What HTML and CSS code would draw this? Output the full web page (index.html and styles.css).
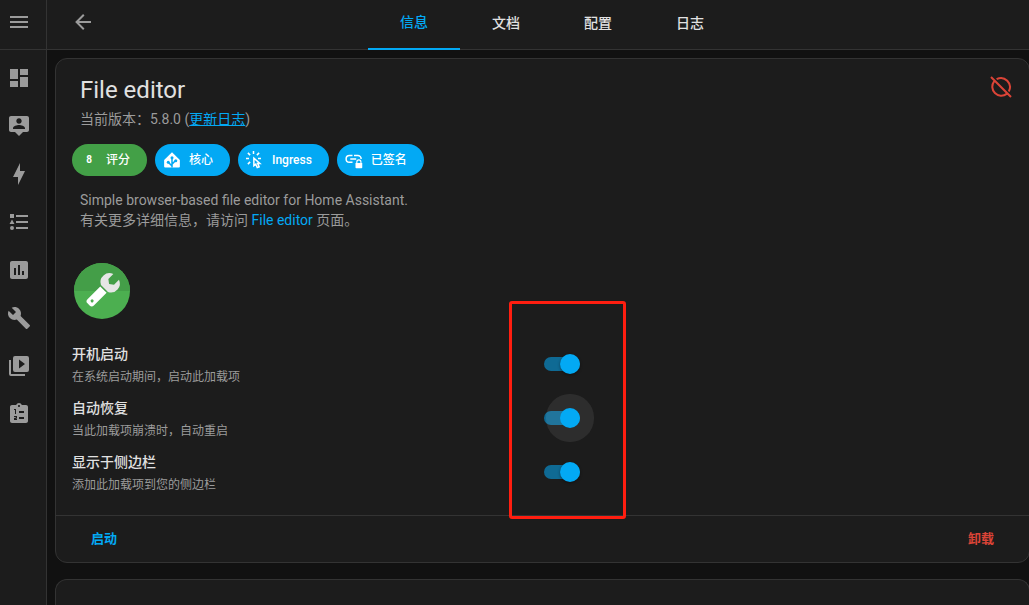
FILE: index.html
```
<!DOCTYPE html>
<html lang="zh-CN">
<head>
    <meta charset="UTF-8">
    <meta name="viewport" content="width=device-width, initial-scale=1.0">
    <title>File editor</title>
    <link rel="stylesheet" href="styles.css">
</head>
<body>

<nav class="sidebar">
    <button class="menu-button" aria-label="菜单">
        <svg viewBox="0 0 24 24"><path d="M3,6H21V8H3V6M3,11H21V13H3V11M3,16H21V18H3V16Z"/></svg>
    </button>
    <a href="#" aria-label="概览">
        <svg viewBox="0 0 24 24"><path d="M13,3V9H21V3M13,21H21V11H13M3,21H11V15H3M3,13H11V3H3V13Z"/></svg>
    </a>
    <a href="#" aria-label="地图">
        <svg viewBox="0 0 24 24"><path d="M20 2H4C2.9 2 2 2.9 2 4V16C2 17.11 2.9 18 4 18H8L12 22L16 18H20C21.11 18 22 17.11 22 16V4C22 2.9 21.11 2 20 2M12 4.3C13.5 4.3 14.7 5.5 14.7 7S13.5 9.7 12 9.7 9.3 8.5 9.3 7 10.5 4.3 12 4.3M18 15H6V14.1C6 12.1 10 11 12 11S18 12.1 18 14.1V15Z"/></svg>
    </a>
    <a href="#" aria-label="能源">
        <svg viewBox="0 0 24 24"><path d="M11 15H6L13 1V9H18L11 23V15Z"/></svg>
    </a>
    <a href="#" aria-label="日志">
        <svg viewBox="0 0 24 24"><path d="M5,9.5L7.5,14H2.5L5,9.5M3,4H7V8H3V4M5,20A2,2 0 0,0 7,18A2,2 0 0,0 5,16A2,2 0 0,0 3,18A2,2 0 0,0 5,20M9,5V7H21V5H9M9,19H21V17H9V19M9,13H21V11H9V13Z"/></svg>
    </a>
    <a href="#" aria-label="历史">
        <svg viewBox="0 0 24 24"><path d="M19 3H5C3.9 3 3 3.9 3 5V19C3 20.1 3.9 21 5 21H19C20.1 21 21 20.1 21 19V5C21 3.9 20.1 3 19 3M9 17H7V10H9V17M13 17H11V7H13V17M17 17H15V13H17V17Z"/></svg>
    </a>
    <a href="#" aria-label="工具">
        <svg viewBox="0 0 24 24"><path d="M22.7,19L13.6,9.9C14.5,7.6 14,4.9 12.1,3C10.1,1 7.1,0.6 4.7,1.7L9,6L6,9L1.6,4.7C0.4,7.1 0.9,10.1 2.9,12.1C4.8,14 7.5,14.5 9.8,13.6L18.9,22.7C19.3,23.1 19.9,23.1 20.3,22.7L22.6,20.4C23.1,20 23.1,19.3 22.7,19Z"/></svg>
    </a>
    <a href="#" aria-label="媒体">
        <svg viewBox="0 0 24 24"><path d="M4,6H2V20A2,2 0 0,0 4,22H18V20H4V6M20,2H8A2,2 0 0,0 6,4V16A2,2 0 0,0 8,18H20A2,2 0 0,0 22,16V4A2,2 0 0,0 20,2M12,14.5V5.5L18,10L12,14.5Z"/></svg>
    </a>
    <a href="#" aria-label="待办事项">
        <svg viewBox="0 0 24 24"><path d="M19 3H14.8C14.4 1.8 13.3 1 12 1S9.6 1.8 9.2 3H5C3.9 3 3 3.9 3 5V19C3 20.1 3.9 21 5 21H19C20.1 21 21 20.1 21 19V5C21 3.9 20.1 3 19 3M12 3C12.6 3 13 3.4 13 4S12.6 5 12 5 11 4.6 11 4 11.4 3 12 3M7 7H9V12H8V8H7V7M7 14H10V16.5L8.5 17H10V18H7V16L9 15.5V15H7V14M12 9H17V11H12V9M12 15H17V17H12V15Z"/></svg>
    </a>
</nav>

<div class="main">
    <header class="toolbar">
        <button class="back-button" aria-label="返回">
            <svg viewBox="0 0 24 24"><path d="M20,11V13H8L13.5,18.5L12.08,19.92L4.16,12L12.08,4.08L13.5,5.5L8,11H20Z"/></svg>
        </button>
        <div class="tabs">
            <a class="tab active" href="#">信息</a>
            <a class="tab" href="#">文档</a>
            <a class="tab" href="#">配置</a>
            <a class="tab" href="#">日志</a>
        </div>
    </header>

    <div class="content">
        <section class="card">
            <div class="card-body">
                <div class="card-header">
                    <div>
                        <h1>File editor</h1>
                        <p class="version">当前版本：5.8.0 (<a href="#">更新日志</a>)</p>
                    </div>
                    <svg class="status" viewBox="0 0 24 24"><path d="M2 2L22 22M7.6 4.2A9 9 0 0 1 19.8 16.4M17.7 18.9A9 9 0 0 1 5.1 6.3"/></svg>
                </div>

                <div class="chips">
                    <button class="chip green"><span class="rating">8</span>评分</button>
                    <button class="chip">
                        <svg viewBox="0 0 24 24"><path d="M12 1.5L22.5 12V20.5Q22.5 22 21 22H3Q1.5 22 1.5 20.5V12Z"/><path class="cut" d="M12 22V9M12 20L7 15M12 17.5L16.5 13"/><g class="dot"><circle cx="12" cy="9" r="2"/><circle cx="7" cy="15" r="2"/><circle cx="17" cy="13" r="2"/></g></svg>
                        核心
                    </button>
                    <button class="chip">
                        <svg class="line" viewBox="0 0 24 24"><path d="M10 0V4M2.5 2.5L5.5 5.5M17.5 2.5L14.5 5.5M0 10H4M16 10H20M2.5 17.5L5.5 14.5M10.5 9.5V19.5L13 17.5L15 22L17.5 21L15.5 16.5H18.5Z"/></svg>
                        Ingress
                    </button>
                    <button class="chip">
                        <svg class="line" viewBox="0 0 24 24"><path d="M10 6H6A4.5 4.5 0 0 0 6 15H10M7 10.5H15M12 6H17A4.5 4.5 0 0 1 21.5 10.5"/><path class="lock" d="M14 16H23V22Q23 23 22 23H15Q14 23 14 22ZM15 16V14.5A3.5 3.5 0 0 1 22 14.5V16H20.5V14.5A2 2 0 0 0 16.5 14.5V16Z"/></svg>
                        已签名
                    </button>
                </div>

                <p class="description">
                    Simple browser-based file editor for Home Assistant.<br>
                    有关更多详细信息，请访问 <a href="#">File editor</a> 页面。
                </p>

                <svg class="logo" viewBox="0 0 60 60">
                    <circle cx="30" cy="30" r="28" fill="#4caf50"/>
                    <path d="M2 30A28 28 0 0 1 58 30Z" fill="#449e48"/>
                    <g transform="rotate(45 30 30)">
                        <path d="M25.5 28H34.5V46Q34.5 49 31.5 49H28.5Q25.5 49 25.5 46ZM30 42.5A1.5 1.5 0 1 0 30 45.5A1.5 1.5 0 1 0 30 42.5" fill="#fff" fill-rule="evenodd"/>
                        <path d="M26 10V17L30 20L34 17V10A9 9 0 0 1 35 26.5H25A9 9 0 0 1 26 10Z" fill="#e6e6e6"/>
                    </g>
                </svg>

                <div class="options">
                    <div class="option">
                        <label for="boot"><span class="name">开机启动</span><span class="hint">在系统启动期间，启动此加载项</span></label>
                        <input class="switch" type="checkbox" id="boot" checked>
                    </div>
                    <div class="option">
                        <label for="watchdog"><span class="name">自动恢复</span><span class="hint">当此加载项崩溃时，自动重启</span></label>
                        <input class="switch pressed" type="checkbox" id="watchdog" checked>
                    </div>
                    <div class="option">
                        <label for="panel"><span class="name">显示于侧边栏</span><span class="hint">添加此加载项到您的侧边栏</span></label>
                        <input class="switch" type="checkbox" id="panel" checked>
                    </div>
                    <div class="highlight"></div>
                </div>
            </div>

            <div class="card-actions">
                <button>启动</button>
                <button class="warning">卸载</button>
            </div>
        </section>

        <section class="card next"></section>
    </div>
</div>

</body>
</html>
```

FILE: styles.css
```
* {
    box-sizing: border-box;
}
body {
    display: flex;
    height: 100vh;
    margin: 0;
    overflow: hidden;
    background: #111111;
    color: #e1e1e1;
    font-family: Roboto, "Noto Sans CJK SC", sans-serif;
    font-size: 14px;
    line-height: 20px;
}
h1, p {
    margin: 0;
}
a {
    color: #03a9f4;
    text-decoration: none;
}
button {
    border: none;
    padding: 0;
    background: none;
    color: inherit;
    font: inherit;
    cursor: pointer;
}
svg {
    display: block;
    flex: none;
    width: 24px;
    height: 24px;
    fill: currentColor;
    fill-rule: evenodd;
}

/* Sidebar */
.sidebar {
    flex: none;
    width: 47px;
    background: #1c1c1c;
    border-right: 1px solid #333333;
}
.sidebar a,
.menu-button {
    display: flex;
    align-items: center;
    width: 100%;
    height: 48px;
    padding-left: 7px;
    color: #9b9b9b;
}
.menu-button {
    height: 50px;
    padding-bottom: 5px;
    margin-bottom: 4px;
    border-bottom: 1px solid #333333;
}

/* Toolbar */
.main {
    display: flex;
    flex-direction: column;
    flex: 1;
    min-width: 0;
}
.toolbar {
    display: flex;
    flex: none;
    height: 50px;
    padding: 0 32px 0 12px;
    background: #1c1c1c;
    border-bottom: 1px solid #333333;
}
.back-button {
    width: 48px;
    height: 44px;
    padding: 0 12px;
    color: #9b9b9b;
}
.tabs {
    display: flex;
    flex: 1;
    justify-content: center;
}
.tab {
    width: 92px;
    height: 50px;
    line-height: 46px;
    text-align: center;
    font-weight: 500;
    color: #e1e1e1;
}
.tab.active {
    line-height: 44px;
    color: #03a9f4;
    border-bottom: 2px solid #03a9f4;
}

/* Cards */
.content {
    display: flex;
    flex-direction: column;
    flex: 1;
    gap: 16px;
    padding: 8px 0 0 8px;
    margin-right: -1px;
}
.card {
    background: #1c1c1c;
    border: 1px solid #333333;
    border-radius: 12px;
}
.card.next {
    flex: 1;
    border-bottom: none;
    border-radius: 12px 12px 0 0;
}
.card-body {
    padding: 12px 16px 16px;
}
.card-header {
    display: flex;
    justify-content: space-between;
    padding: 0 0 0 8px;
    margin-bottom: 15px;
}
.card-header h1 {
    font-size: 24px;
    font-weight: 400;
    line-height: 38px;
}
.version {
    color: #9b9b9b;
}
.version a {
    text-decoration: underline;
}
.status {
    margin-top: 4px;
    fill: none;
    stroke: #db4437;
    stroke-width: 2;
}

/* Chips */
.chips {
    display: flex;
    gap: 8px;
}
.chip {
    display: flex;
    align-items: center;
    gap: 8px;
    height: 32px;
    padding: 0 17px 0 8px;
    border-radius: 16px;
    background: #03a9f4;
    color: #ffffff;
    font-size: 12px;
    font-weight: 500;
}
.chip.green {
    background: #43a047;
}
.chip svg {
    width: 18px;
    height: 18px;
}
.chip .rating {
    width: 18px;
    font-size: 10px;
    font-weight: 700;
    text-align: center;
}
.chip .line {
    fill: none;
    stroke: #ffffff;
    stroke-width: 2;
}
.chip .line .lock {
    fill: #ffffff;
    stroke: none;
}
.chip .cut {
    fill: none;
    stroke: #03a9f4;
    stroke-width: 2;
}
.chip .dot {
    fill: #03a9f4;
}
.description {
    padding: 0 8px;
    margin: 14px 0 31px;
    color: #9b9b9b;
}
.logo {
    width: 60px;
    height: 60px;
    margin-bottom: 16px;
}

/* Options */
.options {
    position: relative;
    width: 54%;
}
.option {
    display: flex;
    align-items: center;
    justify-content: space-between;
    height: 54px;
}
.option .name,
.option .hint {
    display: block;
}
.option .name {
    font-weight: 500;
    line-height: 26px;
}
.option .hint {
    color: #9b9b9b;
    font-size: 12px;
}
.switch {
    appearance: none;
    position: relative;
    width: 36px;
    height: 20px;
    margin: 0;
    cursor: pointer;
}
.switch::before {
    content: "";
    position: absolute;
    top: 3px;
    left: 0;
    width: 36px;
    height: 14px;
    border-radius: 7px;
    background: #0f6a94;
}
.switch::after {
    content: "";
    position: absolute;
    top: 0;
    right: 0;
    width: 20px;
    height: 20px;
    border-radius: 50%;
    background: #03a9f4;
    box-shadow: 0 1px 3px rgba(0, 0, 0, 0.4);
}
.switch.pressed::after {
    box-shadow: 0 0 0 14px rgba(255, 255, 255, 0.08);
}
.highlight {
    position: absolute;
    top: -36px;
    right: -46px;
    width: 117px;
    height: 218px;
    border: 3px solid #ff1e10;
    border-radius: 3px;
    pointer-events: none;
}

/* Card actions */
.card-actions {
    display: flex;
    align-items: center;
    justify-content: space-between;
    height: 47px;
    padding: 0 35px;
    border-top: 1px solid #333333;
}
.card-actions button {
    color: #03a9f4;
    font-size: 13px;
    font-weight: 700;
}
.card-actions .warning {
    color: #db4437;
}
```
